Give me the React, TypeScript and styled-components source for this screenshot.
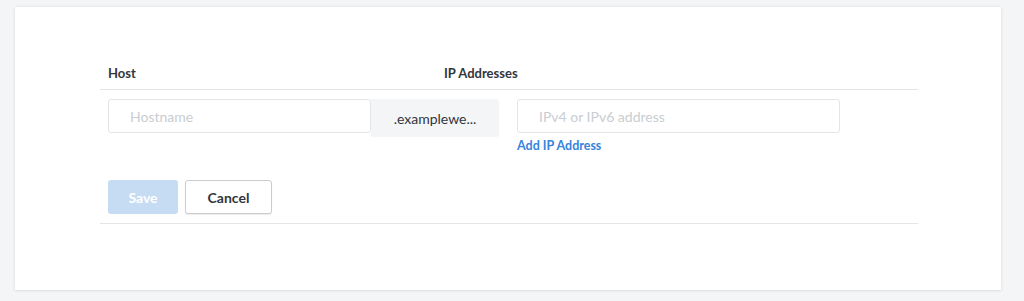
import styled, { createGlobalStyle } from "styled-components";

const GlobalStyle = createGlobalStyle`
  html, body {
    margin: 0;
    padding: 0;
    background: #f4f5f7;
    font-family: Lato, "Liberation Sans", sans-serif;
  }
`;

const App = () => {
  return (
    <Page>
      <GlobalStyle />
      <Card>
        <Table>
          <HeaderRow>
            <HeaderCell width={336}>Host</HeaderCell>
            <HeaderCell>IP Addresses</HeaderCell>
          </HeaderRow>
          <Body>
            <FieldRow>
              <HostGroup>
                <TextInput width={263} placeholder="Hostname" />
                <Suffix>.examplewe...</Suffix>
              </HostGroup>
              <IpColumn>
                <TextInput width={323} placeholder="IPv4 or IPv6 address" />
                <AddLink>Add IP Address</AddLink>
              </IpColumn>
            </FieldRow>
            <Actions>
              <Button $primary disabled width={70}>
                Save
              </Button>
              <Button width={87}>Cancel</Button>
            </Actions>
          </Body>
        </Table>
      </Card>
    </Page>
  );
};

export default App;

const Page = styled.div`
  padding: 7px 23px 11px 15px;
`;

const Card = styled.div`
  width: 986px;
  height: 283px;
  box-sizing: border-box;
  background: #fff;
  box-shadow: 0 0 4px rgba(0, 0, 0, 0.08), 0 1px 2px rgba(0, 0, 0, 0.06);
  padding: 49px 83px 0 85px;
`;

const Table = styled.div`
  display: flex;
  flex-direction: column;
`;

const HeaderRow = styled.div`
  display: flex;
  height: 33px;
  border-bottom: 1px solid #e3e5e8;
`;

const HeaderCell = styled.div<{ width?: number }>`
  width: ${(p) => (p.width ? `${p.width}px` : "auto")};
  flex: ${(p) => (p.width ? "none" : "1")};
  box-sizing: border-box;
  padding-left: 8px;
  display: flex;
  align-items: center;
  font-size: 13px;
  font-weight: 700;
  color: #32363c;
`;

const Body = styled.div`
  padding: 9px 0 9px 8px;
  border-bottom: 1px solid #e3e5e8;
`;

const FieldRow = styled.div`
  display: flex;
  align-items: flex-start;
  gap: 18px;
`;

const HostGroup = styled.div`
  display: flex;
  align-items: flex-start;
`;

const TextInput = styled.input<{ width: number }>`
  width: ${(p) => p.width}px;
  height: 34px;
  box-sizing: border-box;
  border: 1px solid #e3e5e8;
  border-radius: 3px;
  padding: 0 0 0 21px;
  font-family: inherit;
  font-size: 14px;
  color: #32363c;
  outline: none;
  &::placeholder {
    color: #c9cdd2;
  }
`;

const Suffix = styled.div`
  width: 128px;
  height: 38px;
  box-sizing: border-box;
  background: #f4f5f7;
  border-radius: 0 3px 3px 0;
  display: flex;
  align-items: center;
  justify-content: center;
  font-size: 14px;
  color: #32363c;
`;

const IpColumn = styled.div`
  display: flex;
  flex-direction: column;
`;

const AddLink = styled.span`
  margin-top: 5px;
  line-height: 16px;
  font-size: 12.5px;
  font-weight: 700;
  color: #3683dc;
  cursor: pointer;
`;

const Actions = styled.div`
  display: flex;
  gap: 7px;
  margin-top: 26px;
`;

const Button = styled.button<{ $primary?: boolean; width: number }>`
  width: ${(p) => p.width}px;
  height: 34px;
  box-sizing: border-box;
  border-radius: 3px;
  font-family: inherit;
  font-size: 14px;
  font-weight: 700;
  border: ${(p) => (p.$primary ? "none" : "1px solid #c9cdd2")};
  background: ${(p) => (p.$primary ? "#c5dcf2" : "#fff")};
  color: ${(p) => (p.$primary ? "#fff" : "#32363c")};
  box-shadow: ${(p) => (p.$primary ? "none" : "0 1px 1px rgba(0,0,0,0.08)")};
`;
